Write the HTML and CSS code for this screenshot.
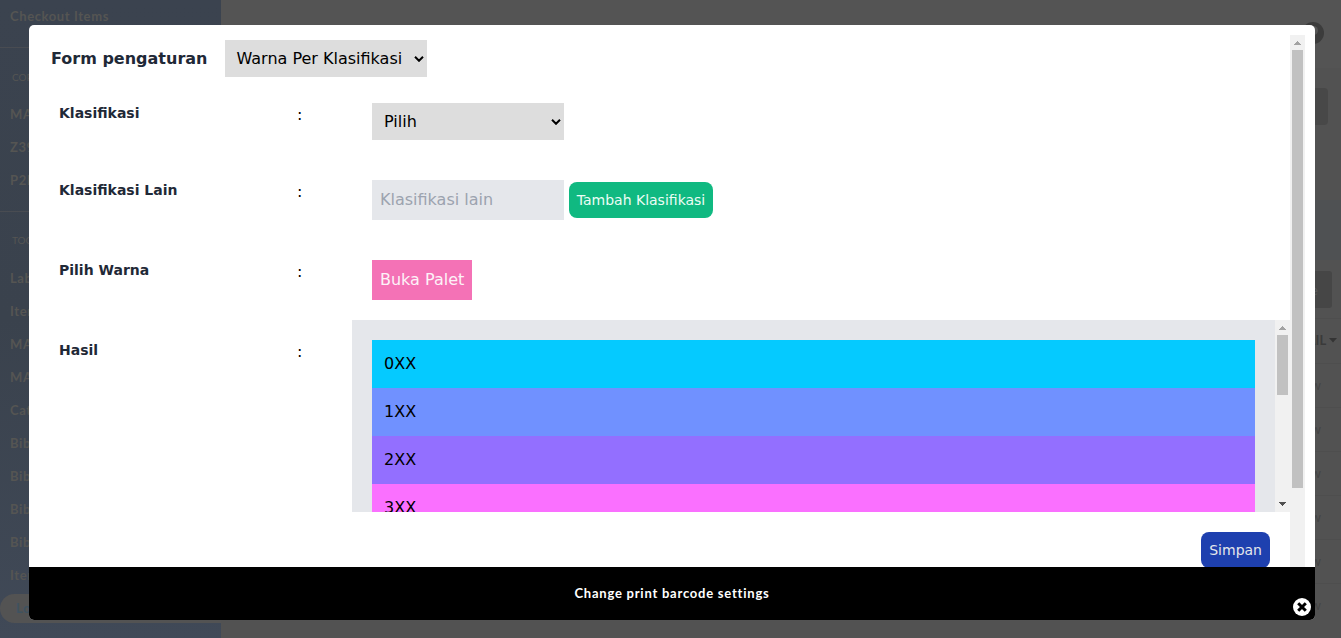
FILE: index.html
```html
<!DOCTYPE html>
<html lang="id">
<head>
<meta charset="utf-8">
<title>Change print barcode settings</title>
<link rel="stylesheet" href="styles.css">
</head>
<body>
<div class="page">
  <nav class="sidebar">
    <a class="nav-item first">Checkout Items</a>
    <div class="nav-title">COPY</div>
    <a class="nav-item">MARC</a>
    <a class="nav-item">Z39</a>
    <a class="nav-item">P2P</a>
    <div class="nav-title tools">TOOLS</div>
    <a class="nav-item">Label</a>
    <a class="nav-item">Item</a>
    <a class="nav-item">MARC</a>
    <a class="nav-item">MARC</a>
    <a class="nav-item">Cat</a>
    <a class="nav-item">Biblio</a>
    <a class="nav-item">Biblio</a>
    <a class="nav-item">Biblio</a>
    <a class="nav-item">Biblio</a>
    <a class="nav-item">Item</a>
    <a class="logout">Logout</a>
  </nav>
  <main class="main">
    <header class="topbar"><span class="help"><i></i></span></header>
    <div class="title-band"><span class="band-btn"></span></div>
    <div class="info-band"></div>
    <div class="action-band"><span class="queue-btn">Queue</span></div>
    <div class="grid-head">DETAIL <svg width="8" height="5" viewBox="0 0 8 5"><path d="M0 0h8L4 4.6z" fill="#343434"/></svg></div>
    <div class="grid-row">View</div>
    <div class="grid-row">View</div>
    <div class="grid-row">View</div>
    <div class="grid-row">View</div>
    <div class="grid-row">View</div>
    <div class="grid-row">View</div>
  </main>
</div>

<section class="modal">
  <div class="viewport">
    <div class="form">
      <div class="form-head">
        <h1>Form pengaturan</h1>
        <div class="select wide">Warna Per Klasifikasi<svg width="10" height="6" viewBox="0 0 10 6"><path d="M1 .8l4 4 4-4" fill="none" stroke="#000" stroke-width="2"/></svg></div>
      </div>
      <div class="row">
        <label>Klasifikasi</label><span class="colon">:</span>
        <div class="control"><div class="select">Pilih<svg width="10" height="6" viewBox="0 0 10 6"><path d="M1 .8l4 4 4-4" fill="none" stroke="#000" stroke-width="2"/></svg></div></div>
      </div>
      <div class="row">
        <label>Klasifikasi Lain</label><span class="colon">:</span>
        <div class="control"><input class="text" placeholder="Klasifikasi lain"><button class="btn green">Tambah Klasifikasi</button></div>
      </div>
      <div class="row">
        <label>Pilih Warna</label><span class="colon">:</span>
        <div class="control"><button class="palette">Buka Palet</button></div>
      </div>
      <div class="row result">
        <label>Hasil</label><span class="colon">:</span>
        <div class="list-box">
          <div class="list">
            <div class="item c0">0XX</div>
            <div class="item c1">1XX</div>
            <div class="item c2">2XX</div>
            <div class="item c3">3XX</div>
          </div>
          <div class="scrollbar">
            <svg class="arrow" width="15" height="15" viewBox="0 0 15 15" shape-rendering="crispEdges"><path d="M4 10h7L7.5 6z" fill="#a3a3a3"/></svg>
            <div class="thumb short"></div>
            <svg class="arrow end" width="15" height="15" viewBox="0 0 15 15" shape-rendering="crispEdges"><path d="M4 5h7L7.5 9z" fill="#505050"/></svg>
          </div>
        </div>
      </div>
      <div class="submit"><button class="btn blue">Simpan</button></div>
    </div>
    <div class="scrollbar">
      <svg class="arrow" width="15" height="15" viewBox="0 0 15 15" shape-rendering="crispEdges"><path d="M4 10h7L7.5 6z" fill="#a3a3a3"/></svg>
      <div class="thumb long"></div>
    </div>
  </div>
  <footer class="caption">
    <span>Change print barcode settings</span>
    <svg class="close" width="18" height="18" viewBox="0 0 18 18"><circle cx="9" cy="9" r="9" fill="#fff"/><path d="M5.2 5.2l7.6 7.6M12.8 5.2l-7.6 7.6" stroke="#000" stroke-width="3"/></svg>
  </footer>
</section>
</body>
</html>
```
FILE: styles.css
```css
* { box-sizing: border-box; }
body { margin: 0; height: 638px; overflow: hidden; font: 16px/24px "DejaVu Sans", sans-serif; color: #000; }
.page { display: flex; height: 638px; font-family: Lato, sans-serif; }

.sidebar { width: 221px; overflow: hidden; background: linear-gradient(#3b434f, #3a424d 50%, #404957); color: #555553; }
.nav-item { display: block; height: 33px; padding-left: 10px; font-size: 13px; font-weight: 700; line-height: 33px; letter-spacing: .6px; white-space: nowrap; }
.nav-item.first { height: 47px; }
.nav-title { height: 51px; padding: 17px 0 0 12px; border-top: 1px solid #494c52; font-size: 10px; line-height: 24px; white-space: nowrap; }
.nav-title.tools { padding-top: 16px; }
.nav-item:nth-child(5) { height: 47px; }
.logout { display: block; height: 29px; margin-top: 2px; padding-left: 16px; border-radius: 15px 0 0 15px; background: #535353; color: #3f5260; font-size: 13px; font-weight: 700; line-height: 29px; letter-spacing: .6px; }

.main { flex: 1; background: #525252; color: #444; text-align: right; }
.topbar { display: flex; justify-content: flex-end; height: 68px; padding: 22px 17px 0 0; background: #545454; }
.help { width: 22px; height: 22px; padding: 4px 0 0 7px; border-radius: 50%; background: #3c3c3c; }
.help i { display: block; width: 9px; height: 9px; border-radius: 50%; background: #555; }
.title-band { display: flex; justify-content: flex-end; height: 132px; padding: 20px 13px 0 0; }
.band-btn { width: 60px; height: 37px; border-radius: 4px; background: #484848; }
.info-band { height: 60px; background: #4f5153; }
.action-band { display: flex; justify-content: flex-end; height: 59px; padding: 11px 9px 0 0; border-bottom: 1px solid #4e4e4e; }
.queue-btn { width: 80px; height: 37px; padding-right: 14px; border-radius: 3px; background: #464646; color: #585858; font-size: 14px; line-height: 37px; }
.grid-head { height: 44px; padding-right: 4px; font-size: 13px; font-weight: 700; line-height: 43px; color: #3a3a3a; }
.grid-head svg { vertical-align: 2px; }
.grid-row { height: 44px; padding-right: 20px; border-top: 1px solid #4e4e4e; font-size: 13px; line-height: 43px; }

.modal { position: absolute; left: 29px; top: 25px; display: flex; flex-direction: column; width: 1286px; height: 595px; overflow: hidden; border-radius: 5px; background: #fff; }
.viewport { display: flex; height: 542px; padding: 10px 10px 0; overflow: hidden; }
.form { flex: 1; padding: 5px 0 0 12px; }
.form-head { display: flex; align-items: center; height: 37px; }
h1 { width: 174px; margin: 0; font-size: 16px; line-height: 24px; color: #1f2937; }
.select { display: flex; align-items: center; justify-content: space-between; width: 192px; height: 37px; padding: 0 3px 0 12px; background: #ddd; white-space: nowrap; }
.select.wide { width: 202px; padding-left: 11.5px; }
.row { display: flex; }
.form-head + .row { margin-top: 6px; }
label { width: 246px; padding: 20px 8px; font-size: 14px; font-weight: 700; line-height: 20px; color: #1f2937; }
.colon { width: 55px; padding-top: 20px; }
.control { display: flex; align-items: center; gap: 5px; padding: 20px; }
.text { width: 192px; height: 40px; padding: 7px 8px 9px; border: 0; border-radius: 0; background: #e5e7eb; font: inherit; }
.text::placeholder { color: #9ca3af; opacity: 1; }
button { border: 0; color: #fff; font-family: inherit; }
.btn { height: 36px; padding: 8px; border-radius: 8px; font-size: 14px; line-height: 20px; white-space: nowrap; }
.green { width: 144px; padding: 8px 7px; background: #10b981; color: #ecfdf5; }
.blue { background: #1e40af; color: #e5e7eb; }
.palette { height: 40px; padding: 8px; background: #f472b6; color: #fdf2f8; font-size: 16px; line-height: 24px; }
.list-box { display: flex; flex: 1; height: 192px; overflow: hidden; background: #e5e7eb; }
.list { flex: 1; padding: 20px; }
.item { height: 48px; padding: 12px; }
.c0 { background: #05caff; }
.c1 { background: #7091ff; }
.c2 { background: #936fff; }
.c3 { background: #fa70ff; }
.scrollbar { display: flex; flex: none; flex-direction: column; width: 15px; background: #f1f1f1; }
.arrow { flex: none; }
.arrow.end { margin-top: auto; }
.thumb { width: 11px; margin-left: 2px; background: #c1c1c1; }
.thumb.short { height: 60px; }
.thumb.long { height: 438px; }
.submit { display: flex; justify-content: flex-end; padding: 20px 20px 0 0; }

.caption { position: relative; height: 53px; background: #000; color: #fff; font: 700 13px/53px Lato, sans-serif; letter-spacing: .77px; text-align: center; }
.close { position: absolute; right: 4px; bottom: 4px; }
```
